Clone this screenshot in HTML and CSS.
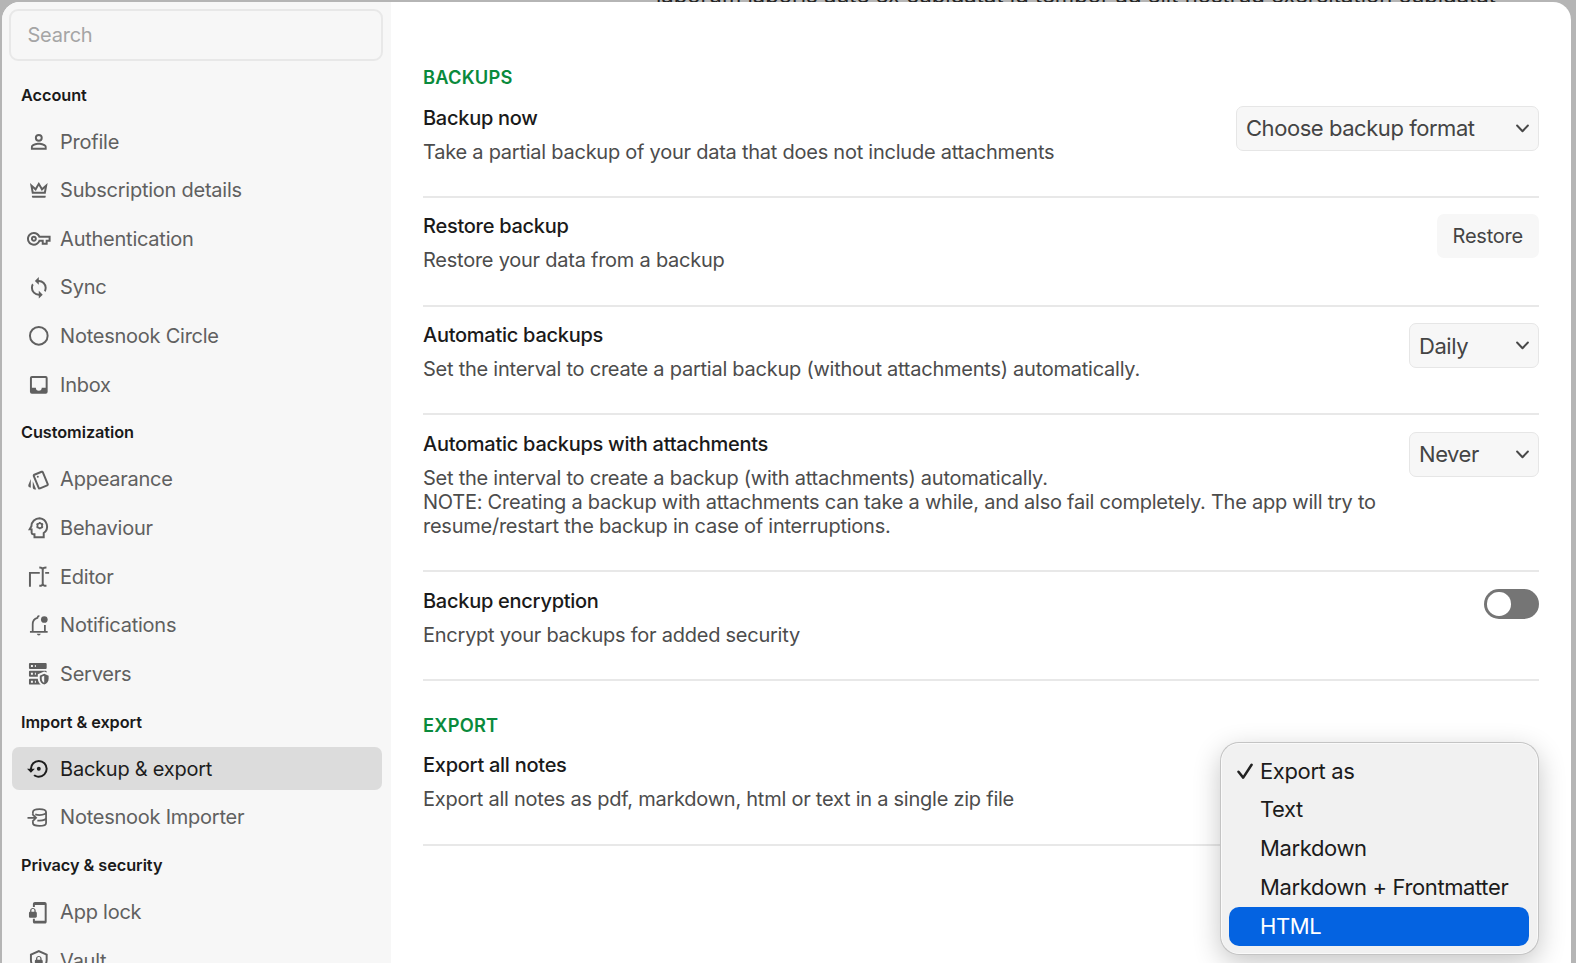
FILE: index.html
```html
<!DOCTYPE html>
<html lang="en">
<head>
<meta charset="utf-8">
<title>Settings</title>
<link rel="stylesheet" href="styles.css">
</head>
<body>
<div class="backdrop-text">laborum laboris aute ex cupidatat id tempor ad elit nostrud exercitation cupidatat</div>
<div class="dialog">
  <nav class="sidebar">
    <div class="search">Search</div>

    <h2 class="group">Account</h2>
    <a class="item"><svg class="icon" viewBox="0 0 24 24"><path d="M12,4A4,4 0 0,1 16,8A4,4 0 0,1 12,12A4,4 0 0,1 8,8A4,4 0 0,1 12,4M12,6A2,2 0 0,0 10,8A2,2 0 0,0 12,10A2,2 0 0,0 14,8A2,2 0 0,0 12,6M12,13C14.67,13 20,14.33 20,17V20H4V17C4,14.33 9.33,13 12,13M12,14.9C9.03,14.9 5.9,16.36 5.9,17V18.1H18.1V17C18.1,16.36 14.97,14.9 12,14.9Z"/></svg><span>Profile</span></a>
    <a class="item"><svg class="icon" viewBox="0 0 24 24"><path d="M12 8L15 13.2L18 10.5L17.3 14H6.7L6 10.5L9 13.2L12 8M12 4L8.5 10L3 5L5 16H19L21 5L15.5 10L12 4M19 18H5V19C5 19.6 5.4 20 6 20H18C18.6 20 19 19.6 19 19V18Z"/></svg><span>Subscription details</span></a>
    <a class="item"><svg class="icon" viewBox="0 0 24 24"><path d="M21 18H15V15H13.3C12.2 17.4 9.7 19 7 19C3.1 19 0 15.9 0 12S3.1 5 7 5C9.7 5 12.2 6.6 13.3 9H24V15H21V18M17 16H19V13H22V11H11.9L11.7 10.3C11 8.3 9.1 7 7 7C4.2 7 2 9.2 2 12S4.2 17 7 17C9.1 17 11 15.7 11.7 13.7L11.9 13H17V16M7 15C5.3 15 4 13.7 4 12S5.3 9 7 9 10 10.3 10 12 8.7 15 7 15M7 11C6.4 11 6 11.4 6 12S6.4 13 7 13 8 12.6 8 12 7.6 11 7 11Z"/></svg><span>Authentication</span></a>
    <a class="item"><svg class="icon" viewBox="0 0 24 24"><path d="M12,18A6,6 0 0,1 6,12C6,11 6.25,10.03 6.7,9.2L5.24,7.74C4.46,8.97 4,10.43 4,12A8,8 0 0,0 12,20V23L16,19L12,15M12,4V1L8,5L12,9V6A6,6 0 0,1 18,12C18,13 17.75,13.97 17.3,14.8L18.76,16.26C19.54,15.03 20,13.57 20,12A8,8 0 0,0 12,4Z"/></svg><span>Sync</span></a>
    <a class="item"><svg class="icon line" viewBox="0 0 24 24"><circle cx="12" cy="12" r="9"/></svg><span>Notesnook Circle</span></a>
    <a class="item"><svg class="icon" viewBox="0 0 24 24"><path d="M19,15H15A3,3 0 0,1 12,18A3,3 0 0,1 9,15H5V5H19M19,3H5C3.89,3 3,3.9 3,5V19A2,2 0 0,0 5,21H19A2,2 0 0,0 21,19V5A2,2 0 0,0 19,3Z"/></svg><span>Inbox</span></a>

    <h2 class="group">Customization</h2>
    <a class="item"><svg class="icon" viewBox="0 0 24 24"><path d="M2.53 19.65l1.34.56v-9.03l-2.43 5.86c-.41 1.02.08 2.19 1.09 2.61zm19.5-3.7L17.07 3.98c-.31-.75-1.04-1.21-1.81-1.23-.26 0-.53.04-.79.15L7.1 5.95c-.75.31-1.21 1.03-1.23 1.8-.01.27.04.54.15.8l4.96 11.97c.31.76 1.05 1.22 1.83 1.23.26 0 .52-.05.77-.15l7.36-3.05c1.02-.42 1.51-1.59 1.09-2.6zm-9.2 3.8L7.87 7.79l7.35-3.04h.01l4.95 11.95-7.35 3.05z"/><circle cx="11" cy="9" r="1"/><path d="M5.88 19.75c0 1.1.9 2 2 2h1.45l-3.45-8.34v6.34z"/></svg><span>Appearance</span></a>
    <a class="item"><svg class="icon line" viewBox="0 0 24 24"><path d="M12.8 2.2a8.3 8.3 0 0 0-8.3 8.1L2.7 13.6H4.7V17Q4.7 18.5 6.2 18.5H7.6V21.6H17V17.3A8.4 8.4 0 0 0 12.8 2.2Z"/><circle cx="13" cy="9.8" r="2.4" stroke-width="1.7"/><path d="M13 6v1.4M13 12.2v1.4M9.7 7.9l1.2.7M15.1 11l1.2.7M9.7 11.7l1.2-.7M15.1 8.6l1.2-.7" stroke-width="1.6"/></svg><span>Behaviour</span></a>
    <a class="item"><svg class="icon line" viewBox="0 0 24 24"><path d="M3 22.2V8H13M18.5 8H22.5M12.5 2.5C14.5 2.5 16 2.7 16 4.5V19C16 21 14.5 21.2 12.5 21.2M19.8 2.5C17.5 2.5 16 2.7 16 4.5M19.8 21.2C17.5 21.2 16 21 16 19"/></svg><span>Editor</span></a>
    <a class="item"><svg class="icon line" viewBox="0 0 24 24"><path d="M3 19.3H21M5.8 19V11.5C5.8 8 7.9 5.6 10.6 4.9Q10.8 3 12.6 2.9M18.2 12.3V19" stroke-width="1.8"/><circle cx="17.6" cy="6.6" r="3.4" fill="currentColor" stroke="none"/><path d="M10 21.2H14Q13.6 23 12 23T10 21.2Z" fill="currentColor" stroke="none"/></svg><span>Notifications</span></a>
    <a class="item"><svg class="icon" viewBox="0 0 24 24"><path fill-rule="evenodd" d="M3 1H19A1 1 0 0 1 20 2V6A1 1 0 0 1 19 7H3A1 1 0 0 1 2 6V2A1 1 0 0 1 3 1M3 9H19A1 1 0 0 1 20 10V10.7L17.5 9.6L11 12.5V15H3A1 1 0 0 1 2 14V10A1 1 0 0 1 3 9M3 17H11C11.1 19.3 12.2 21.5 14 23H3A1 1 0 0 1 2 22V18A1 1 0 0 1 3 17M8 5H9V3H8V5M8 13H9V11H8V13M8 21H9V19H8V21M4 3V5H6V3H4M4 11V13H6V11H4M4 19V21H6V19H4M17.5 12L22 14V17C22 19.8 20.1 22.4 17.5 23C14.9 22.4 13 19.8 13 17V14L17.5 12M17.5 13.9L15 15.1V17.2C15 18.9 16 20.4 17.5 21V13.9Z"/></svg><span>Servers</span></a>

    <h2 class="group">Import &amp; export</h2>
    <a class="item active"><svg class="icon" viewBox="0 0 24 24"><path d="M12,3A9,9 0 0,0 3,12H0L4,16L8,12H5A7,7 0 0,1 12,5A7,7 0 0,1 19,12A7,7 0 0,1 12,19C10.5,19 9.09,18.5 7.94,17.7L6.5,19.14C8.04,20.3 9.94,21 12,21A9,9 0 0,0 21,12A9,9 0 0,0 12,3M14,12A2,2 0 0,0 12,10A2,2 0 0,0 10,12A2,2 0 0,0 12,14A2,2 0 0,0 14,12Z"/></svg><span>Backup &amp; export</span></a>
    <a class="item"><svg class="icon line" viewBox="0 0 24 24"><path d="M6 8V6.2C6 4.4 9 3.2 12.7 3.2S19.4 4.4 19.4 6.2V17.3C19.4 19.1 16.4 20.3 12.7 20.3S6 19.1 6 17.3V16M19.4 6.2C19.4 8 16.4 9.2 12.7 9.2Q10.2 9.2 8.4 8.6M19.4 11.8C19.4 13.7 16.4 14.9 12.7 14.9L10.5 14.8M.5 12H9M5.4 8.2L9.2 12L5.4 15.8" stroke-width="1.8"/></svg><span>Notesnook Importer</span></a>

    <h2 class="group">Privacy &amp; security</h2>
    <a class="item"><svg class="icon" viewBox="0 0 24 24"><path d="M18 1H8C6.9 1 6 1.9 6 3V6H8V4H18V20H8V18H6V21C6 22.1 6.9 23 8 23H18C19.1 23 20 22.1 20 21V3C20 1.9 19.1 1 18 1M8.8 11V9.5C8.8 8.1 7.4 7 6 7S3.2 8.1 3.2 9.5V11C2.6 11 2 11.6 2 12.2V15.7C2 16.4 2.6 17 3.2 17H8.7C9.4 17 10 16.4 10 15.8V12.3C10 11.6 9.4 11 8.8 11M7.5 11H4.5V9.5C4.5 8.7 5.2 8.2 6 8.2S7.5 8.7 7.5 9.5V11Z"/></svg><span>App lock</span></a>
    <a class="item"><svg class="icon" viewBox="0 0 24 24"><path d="M21 11C21 16.5 17.2 21.7 12 23C6.8 21.7 3 16.5 3 11V5L12 1L21 5V11M12 21C15.8 20 19 15.5 19 11.2V6.3L12 3.2L5 6.3V11.2C5 15.5 8.2 20 12 21M14.8 11V9.5C14.8 8.1 13.4 7 12 7S9.2 8.1 9.2 9.5V11C8.6 11 8 11.6 8 12.2V15.7C8 16.4 8.6 17 9.2 17H14.7C15.4 17 16 16.4 16 15.8V12.3C16 11.6 15.4 11 14.8 11M13.5 11H10.5V9.5C10.5 8.7 11.2 8.2 12 8.2S13.5 8.7 13.5 9.5V11Z"/></svg><span>Vault</span></a>
  </nav>

  <main class="content">
    <h3 class="section">BACKUPS</h3>
    <section class="row">
      <div class="info"><h4>Backup now</h4><p>Take a partial backup of your data that does not include attachments</p></div>
      <div class="select wide"><span>Choose backup format</span><svg class="chevron" viewBox="0 0 12 8"><path d="M1 1.2L6 6.5L11 1.2"/></svg></div>
    </section>
    <section class="row">
      <div class="info"><h4>Restore backup</h4><p>Restore your data from a backup</p></div>
      <div class="button">Restore</div>
    </section>
    <section class="row">
      <div class="info"><h4>Automatic backups</h4><p>Set the interval to create a partial backup (without attachments) automatically.</p></div>
      <div class="select"><span>Daily</span><svg class="chevron" viewBox="0 0 12 8"><path d="M1 1.2L6 6.5L11 1.2"/></svg></div>
    </section>
    <section class="row">
      <div class="info"><h4>Automatic backups with attachments</h4><p>Set the interval to create a backup (with attachments) automatically.<br>NOTE: Creating a backup with attachments can take a while, and also fail completely. The app will try to<br>resume/restart the backup in case of interruptions.</p></div>
      <div class="select"><span>Never</span><svg class="chevron" viewBox="0 0 12 8"><path d="M1 1.2L6 6.5L11 1.2"/></svg></div>
    </section>
    <section class="row">
      <div class="info"><h4>Backup encryption</h4><p>Encrypt your backups for added security</p></div>
      <div class="toggle"><i class="knob"></i></div>
    </section>

    <h3 class="section later">EXPORT</h3>
    <section class="row">
      <div class="info"><h4>Export all notes</h4><p>Export all notes as pdf, markdown, html or text in a single zip file</p></div>
      <div class="anchor">
        <div class="select"></div>
        <div class="menu">
          <div class="option"><svg class="check" viewBox="0 0 16 17"><path d="M1.5 8.8L6.2 14.6L14.6 1.8"/></svg><span>Export as</span></div>
          <div class="option"><span>Text</span></div>
          <div class="option"><span>Markdown</span></div>
          <div class="option"><span>Markdown + Frontmatter</span></div>
          <div class="option chosen"><span>HTML</span></div>
        </div>
      </div>
    </section>
  </main>
</div>
</body>
</html>
```
FILE: styles.css
```css
* { box-sizing: border-box; }
html, body { height: 100%; overflow: hidden; }
body {
  margin: 0;
  background: #b5b5b5;
  font-family: Inter, "Liberation Sans", sans-serif;
  font-size: 20px;
  letter-spacing: -0.245px;
  position: relative;
}
h2, h3, h4, p { margin: 0; }

.backdrop-text {
  position: absolute;
  left: 656px;
  top: -19.5px;
  font-size: 22.1px;
  line-height: 28px;
  letter-spacing: 0;
  white-space: nowrap;
  color: #222;
}
.dialog {
  position: relative;
  display: flex;
  height: 990px;
  margin: 2px 5px 0 2px;
  border-radius: 18px;
  background: #fff;
  overflow: hidden;
}

.sidebar {
  width: 389px;
  flex: none;
  background: #f7f7f7;
  padding: 7px 8px 0 7px;
}
.search {
  height: 52px;
  border: 2px solid #e8e8e8;
  border-radius: 9px;
  padding-left: 16.5px;
  line-height: 48px;
  color: #a5a5a5;
  margin-bottom: 12.5px;
}
.group {
  height: 42.8px;
  line-height: 42.8px;
  padding-left: 12px;
  margin-bottom: 3.6px;
  font-size: 16.3px;
  font-weight: 600;
  letter-spacing: -0.06px;
  color: #1a1a1a;
}
.item {
  display: flex;
  align-items: center;
  gap: 9.5px;
  height: 43.45px;
  margin: 0 1.5px 5.15px 2.5px;
  padding-left: 15.5px;
  border-radius: 7px;
  color: #606060;
}
.item.active { background: #dcdcdc; color: #1d1d1d; }
.icon { width: 23.6px; height: 23.6px; flex: none; fill: currentColor; }
.icon.line { fill: none; stroke: currentColor; stroke-width: 2; }

.content {
  flex: 1;
  padding: 63.2px 32px 0;
}
.section {
  height: 24px;
  line-height: 24px;
  font-size: 18.3px;
  font-weight: 600;
  color: #0a8a3c;
  letter-spacing: 0.22px;
}
.section.later { margin-top: 31.7px; }
.row {
  display: flex;
  justify-content: space-between;
  align-items: flex-start;
  padding: 16.6px 0 31.8px;
  border-bottom: 2px solid #e8e8e8;
}
.info { white-space: nowrap; line-height: 24.3px; }
.info h4 { font-size: 20px; font-weight: 500; letter-spacing: -0.265px; color: #1a1a1a; margin-bottom: 9.7px; }
.info p { color: #4c4c4c; }

.select {
  display: flex;
  align-items: center;
  justify-content: space-between;
  width: 130px;
  height: 45px;
  padding: 0 9px;
  background: #f7f7f7;
  border: 1.5px solid #e6e6e6;
  border-radius: 7px;
  font-size: 22px;
  letter-spacing: -0.45px;
  color: #444;
}
.select.wide { width: 303px; }
.chevron { width: 13px; height: 9px; fill: none; stroke: #484848; stroke-width: 1.8; stroke-linecap: round; stroke-linejoin: round; }
.button {
  width: 102.5px;
  height: 44px;
  line-height: 44px;
  text-align: center;
  background: #f7f7f7;
  border-radius: 7px;
  color: #444;
}
.toggle {
  width: 55px;
  height: 29.5px;
  padding: 3px;
  border-radius: 15px;
  background: #757575;
}
.knob { display: block; width: 23.5px; height: 23.5px; border-radius: 50%; background: #fff; }

.anchor { position: relative; }
.menu {
  position: absolute;
  right: 1px;
  top: -10.5px;
  width: 317px;
  height: 211px;
  padding: 7.2px 8px 8px 7px;
  border-radius: 18px;
  background: #f1f1f1;
  border: 1px solid #fafafa;
  box-shadow: 0 0 0 1px #c4c4c4, 0 8px 28px rgba(0, 0, 0, .24);
  white-space: nowrap;
  font-size: 22px;
  letter-spacing: -0.38px;
  color: #1c1c1c;
}
.option {
  display: flex;
  align-items: center;
  position: relative;
  height: 38.9px;
  padding-left: 31px;
  border-radius: 10px;
}
.option.chosen { background: #0463e1; color: #fff; }
.check {
  position: absolute;
  left: 8px;
  top: 11.5px;
  width: 16px;
  height: 17px;
  fill: none;
  stroke: #222;
  stroke-width: 2.5;
  stroke-linecap: round;
  stroke-linejoin: round;
}
```
